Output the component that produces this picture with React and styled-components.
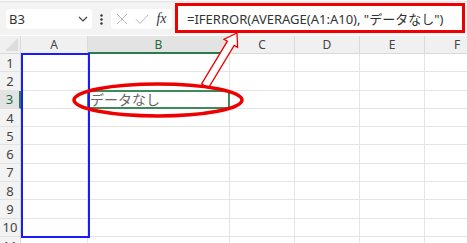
import React from "react";
import styled, { createGlobalStyle } from "styled-components";

const Global = createGlobalStyle`
  html, body { margin: 0; padding: 0; background: #fff; }
  body { font-family: "Noto Sans", "Noto Sans CJK JP", sans-serif; }
`;

const Frame = styled.div`
  position: relative;
  width: 467px;
  height: 243px;
  overflow: hidden;
  background: #fff;
`;

const Toolbar = styled.div`
  height: 35px;
  background: #f3f3f3;
  border-top: 1px solid #fafafa;
  box-shadow: inset 0 2px 2px -1px #e2e2e2;
  display: flex;
  align-items: center;
  padding-left: 6px;
  box-sizing: border-box;
`;

const NameBox = styled.div`
  width: 86px;
  height: 20px;
  background: #fff;
  border-radius: 4px;
  display: flex;
  align-items: center;
  justify-content: space-between;
  padding: 0 4px 0 3px;
  box-sizing: border-box;
  font-size: 13px;
  color: #333;
  margin-top: 2px;
`;

const Dots = styled.div`
  width: 19px;
  display: flex;
  justify-content: center;
  margin-top: 2px;
`;

const IconBox = styled.div`
  width: 61px;
  height: 20px;
  background: #fff;
  border-radius: 4px;
  display: flex;
  align-items: center;
  justify-content: space-around;
  padding: 0 2px;
  box-sizing: border-box;
  margin-top: 2px;
`;

const Fx = styled.span`
  font-family: "Liberation Serif", serif;
  font-style: italic;
  font-size: 14px;
  color: #333;
`;

const FormulaBar = styled.div`
  margin-left: 3px;
  width: 290px;
  height: 30px;
  border: 3px solid #ee0000;
  box-sizing: border-box;
  background: #fff;
  display: flex;
  align-items: center;
  padding-left: 9px;
  font-size: 13px;
  color: #333;
  white-space: nowrap;
`;

const Grid = styled.div`
  display: grid;
  grid-template-columns: 21px 67px 142px 65px 65px 65px 65px 65px;
  grid-template-rows: 18px repeat(11, 18.3px);
  margin-top: 1px;
`;

const Corner = styled.div`
  background: #f0f0f0;
  border-right: 1px solid #d9d9d9;
  border-bottom: 1px solid #d9d9d9;
  position: relative;
  &::after {
    content: "";
    position: absolute;
    right: 2px;
    bottom: 2px;
    width: 0;
    height: 0;
    border-left: 13px solid transparent;
    border-bottom: 13px solid #dcdcdc;
  }
`;

const ColHead = styled.div`
  background: ${(p) => (p.$active ? "#e3e3e3" : "#f0f0f0")};
  color: ${(p) => (p.$active ? "#1c6b3a" : "#444")};
  border-right: 1px solid #dadada;
  border-bottom: ${(p) => (p.$active ? "2px solid #2d7a4a" : "1px solid #d9d9d9")};
  font-size: 12px;
  display: flex;
  align-items: center;
  justify-content: center;
  box-sizing: border-box;
`;

const RowHead = styled.div`
  background: ${(p) => (p.$active ? "#e3e3e3" : "#f3f3f3")};
  color: ${(p) => (p.$active ? "#1c6b3a" : "#444")};
  border-right: ${(p) => (p.$active ? "2px solid #2d7a4a" : "1px solid #dadada")};
  border-bottom: 1px solid #e2e2e2;
  font-size: 13px;
  display: flex;
  align-items: center;
  justify-content: center;
  box-sizing: border-box;
`;

const Cell = styled.div`
  border-right: 1px solid #e4e4e4;
  border-bottom: 1px solid #e4e4e4;
  box-sizing: border-box;
  font-size: 14px;
  color: #666;
  display: flex;
  align-items: center;
  padding-left: 2px;
  white-space: nowrap;
  ${(p) =>
    p.$active &&
    `
    border: 2px solid #3f8a5a;
    margin: -1px 0 0 -1px;
    padding-left: 1px;
  `}
`;

const Selection = styled.div`
  position: absolute;
  left: 21px;
  top: 53px;
  width: 69px;
  height: 185px;
  border: 2px solid #1a1aff;
  box-sizing: border-box;
  pointer-events: none;
`;

const Annotation = styled.svg`
  position: absolute;
  left: 0;
  top: 0;
  pointer-events: none;
`;

const cols = ["A", "B", "C", "D", "E", "F", ""];

export default function App() {
  const rows = Array.from({ length: 11 }, (_, i) => i + 1);
  return (
    <Frame>
      <Global />
      <Toolbar>
        <NameBox>
          <span>B3</span>
          <svg width="10" height="6" viewBox="0 0 10 6">
            <path d="M1 1 L5 5 L9 1" fill="none" stroke="#444" strokeWidth="1.2" />
          </svg>
        </NameBox>
        <Dots>
          <svg width="3" height="11" viewBox="0 0 3 11">
            <circle cx="1.5" cy="1.5" r="1.2" fill="#333" />
            <circle cx="1.5" cy="5.5" r="1.2" fill="#333" />
            <circle cx="1.5" cy="9.5" r="1.2" fill="#333" />
          </svg>
        </Dots>
        <IconBox>
          <svg width="12" height="12" viewBox="0 0 12 12">
            <path d="M1 1 L11 11 M11 1 L1 11" stroke="#bdbdbd" strokeWidth="1" />
          </svg>
          <svg width="14" height="11" viewBox="0 0 14 11">
            <path d="M1 5.5 L5 9.5 L13 1" fill="none" stroke="#bdbdbd" strokeWidth="1" />
          </svg>
          <Fx>fx</Fx>
        </IconBox>
        <FormulaBar>=IFERROR(AVERAGE(A1:A10), "データなし")</FormulaBar>
      </Toolbar>
      <Grid>
        <Corner />
        {cols.map((c, i) => (
          <ColHead key={i} $active={c === "B"}>
            {c}
          </ColHead>
        ))}
        {rows.map((r) => (
          <React.Fragment key={r}>
            <RowHead $active={r === 3}>{r}</RowHead>
            {cols.map((c, i) => (
              <Cell key={i} $active={r === 3 && c === "B"}>
                {r === 3 && c === "B" ? "データなし" : ""}
              </Cell>
            ))}
          </React.Fragment>
        ))}
      </Grid>
      <Selection />
      <Annotation width="467" height="243" viewBox="0 0 467 243">
        <polygon
          points="201.6,83.9 227.4,41.2 224,39.2 237,33 237.6,47.4 234.2,45.4 208.4,88.1"
          fill="#fff"
          stroke="#ee0000"
          strokeWidth="1.3"
          strokeLinejoin="miter"
        />
        <ellipse cx="158" cy="100" rx="84" ry="16" fill="none" stroke="#ee0000" strokeWidth="3.5" />
      </Annotation>
    </Frame>
  );
}
